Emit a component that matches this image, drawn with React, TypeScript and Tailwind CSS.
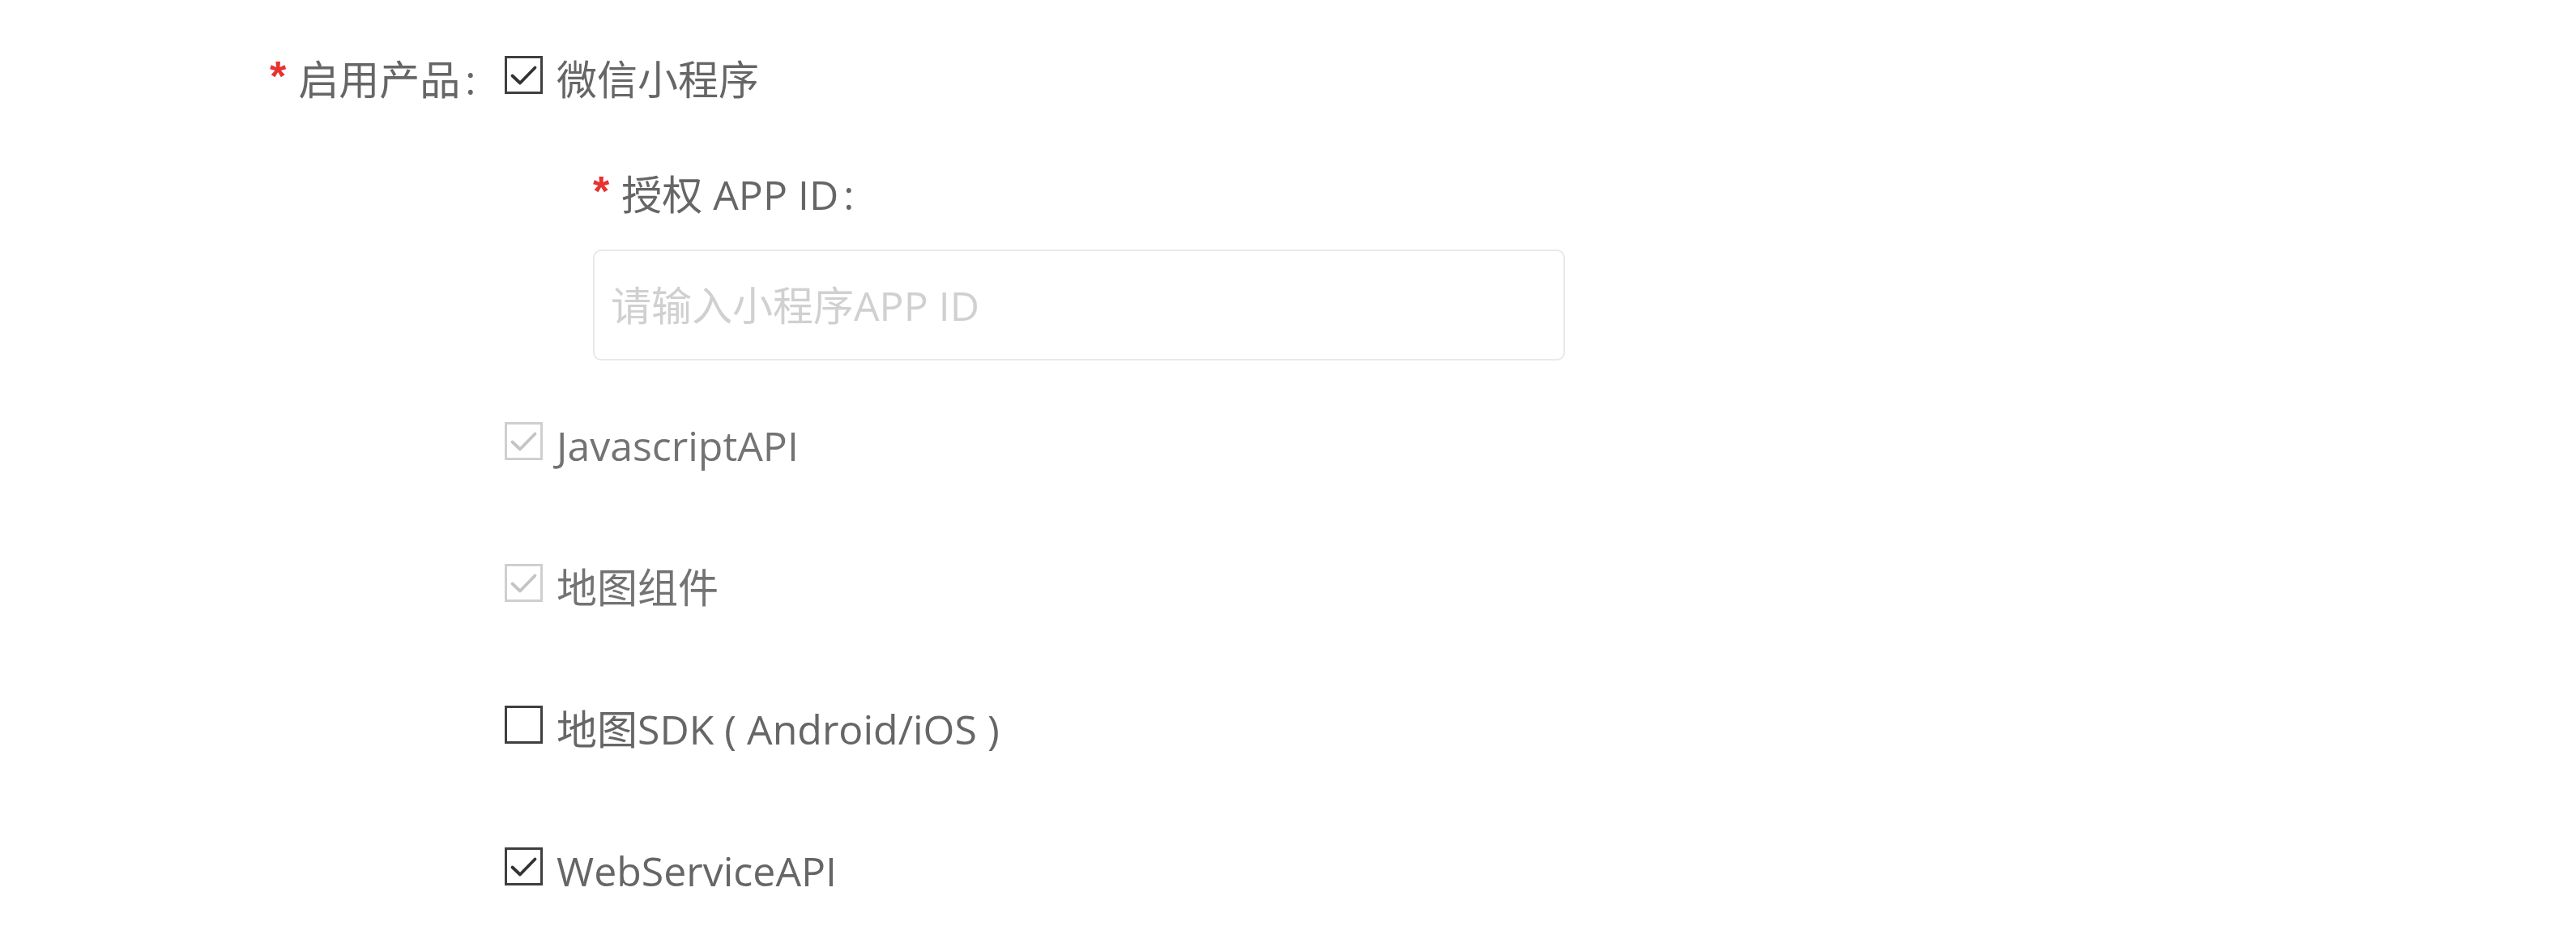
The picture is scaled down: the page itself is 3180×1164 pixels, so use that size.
import { useState } from "react";

type BoxProps = { checked: boolean; disabled?: boolean };

function CheckBox({ checked, disabled }: BoxProps) {
  const edge = disabled ? "#cfcfcf" : "#3f3f3f";
  const tick = disabled ? "#c4c4c4" : "#333333";
  return (
    <svg width="47" height="47" viewBox="0 0 47 47" className="mb-[12px] shrink-0">
      <rect x="1.5" y="1.5" width="44" height="44" fill="#fff" stroke={edge} strokeWidth="3" />
      {checked && (
        <path
          d="M9.5 24.5 L19 33.5 L37.5 14.5"
          fill="none"
          stroke={tick}
          strokeWidth="3.8"
          strokeLinecap="round"
          strokeLinejoin="round"
        />
      )}
    </svg>
  );
}

function Row({ label, checked, disabled }: { label: string } & BoxProps) {
  return (
    <div className="flex h-[75px] items-center">
      <CheckBox checked={checked} disabled={disabled} />
      <span className={`ml-[17px] ${disabled ? "text-[#737373]" : "text-[#666]"}`}>{label}</span>
    </div>
  );
}

// red mark in front of a required label
function Required() {
  return (
    <span className="mb-[8px] mr-[15px] font-['Liberation_Sans',sans-serif] text-[52px] font-bold text-[#e8322f]">
      *
    </span>
  );
}

export default function App() {
  const [appId, setAppId] = useState("");

  const products = [
    { label: "JavascriptAPI", checked: true, disabled: true },
    { label: "地图组件", checked: true, disabled: true },
    { label: "地图SDK ( Android/iOS )", checked: false, disabled: false },
    { label: "WebServiceAPI", checked: true, disabled: false },
  ];

  return (
    <div className="h-[1164px] w-[3180px] bg-white pt-[61px] font-['Open_Sans','Noto_Sans_CJK_SC',sans-serif] text-[50px] leading-[75px] text-[#666]">
      <div className="flex h-[75px] items-center pl-[333px]">
        <div className="flex w-[290px] items-center">
          <Required />
          <span>启用产品</span>
          <span className="ml-[6px]">:</span>
        </div>
        <CheckBox checked />
        <span className="ml-[17px]">微信小程序</span>
      </div>

      <div className="pl-[732px]">
        <div className="mt-[67px] flex h-[75px] items-center">
          <Required />
          <span>授权 APP ID</span>
          <span className="ml-[6px]">:</span>
        </div>
        <input
          value={appId}
          onChange={(e) => setAppId(e.target.value)}
          placeholder="请输入小程序APP ID"
          className="mt-[30px] block h-[137px] w-[1200px] rounded-[10px] border-2 border-[#e9e9e9] bg-white px-[20px] text-[50px] text-[#666] outline-none placeholder:text-[#d0d0d0]"
        />
      </div>

      <div className="mt-[68px] flex flex-col gap-[100px] pl-[623px]">
        {products.map((p) => (
          <Row key={p.label} label={p.label} checked={p.checked} disabled={p.disabled} />
        ))}
      </div>
    </div>
  );
}
